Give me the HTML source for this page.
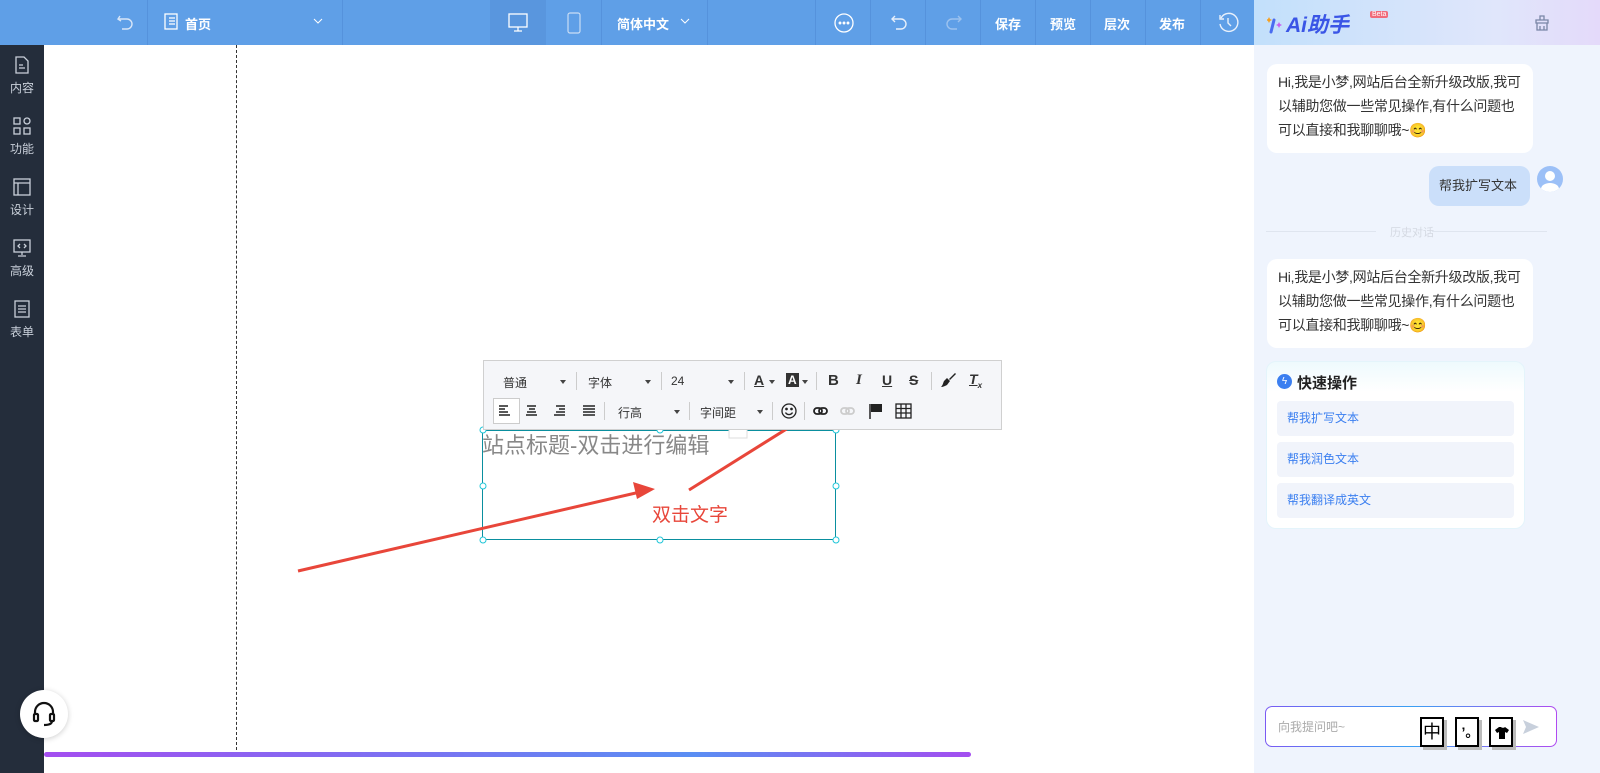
<!DOCTYPE html>
<html><head><meta charset="utf-8"><style>
*{margin:0;padding:0;box-sizing:border-box}
body{width:1600px;height:773px;overflow:hidden;background:#fff;font-family:"Liberation Sans","Noto Sans CJK SC",sans-serif;position:relative}
.top{position:absolute;left:0;top:0;width:1254px;height:45px;background:#5f9fe7;color:#fff;font-size:13px}
.top .sep{position:absolute;top:0;width:1px;height:45px;background:#5592dc}
.top .t{position:absolute;top:14px;font-weight:bold}
.side{position:absolute;left:0;top:45px;width:44px;height:728px;background:#242d3b;color:#c9d0da;font-size:12px}
.side div{position:absolute;left:0;width:44px;text-align:center}
.right{position:absolute;left:1254px;top:0;width:346px;height:773px;background:#eff4fd}
.rhead{position:absolute;left:0;top:0;width:346px;height:45px;background:linear-gradient(90deg,#c2e0fb,#e0e6fb 70%,#e4dafa)}
.bub{position:absolute;background:#fff;border-radius:10px;font-size:14px;line-height:24px;color:#333;padding:6px 8px 6px 11px;letter-spacing:-0.3px}
.qa{position:absolute;left:23px;width:237px;height:35px;background:#f1f4fb;border-radius:4px;color:#3b7ff0;font-size:12px;line-height:35px;padding-left:10px}
.tb{position:absolute;left:483px;top:360px;width:519px;height:70px;background:#f5f6f9;border:1px solid #d0d0d0;font-size:12px;color:#333}
.tb span{position:absolute}
.tri{position:absolute;width:0;height:0;border-left:3px solid transparent;border-right:3px solid transparent;border-top:4px solid #444}
.vs{position:absolute;width:1px;height:18px;background:#ccc}
</style></head><body>
<div class="top">
 <svg style="position:absolute;left:116px;top:13px" width="18" height="18" viewBox="0 0 18 18" fill="none" stroke="#d8e6f8" stroke-width="1.4"><path d="M4 3 L2 6 L5 8"/><path d="M2 6 H11 a5 5 0 0 1 0 10 H6"/></svg>
 <div class="sep" style="left:147px"></div>
 <svg style="position:absolute;left:164px;top:13px" width="15" height="18" viewBox="0 0 15 18" fill="none" stroke="#fff" stroke-width="1.3"><rect x="1" y="1" width="12" height="15"/><path d="M5 5h6M5 8h6M5 11h6"/></svg>
 <span class="t" style="left:185px">首页</span>
 <svg style="position:absolute;left:313px;top:17px" width="10" height="8" viewBox="0 0 10 8" fill="none" stroke="#fff"><path d="M1 2l4 4 4-4"/></svg>
 <div class="sep" style="left:342px"></div>
 <div style="position:absolute;left:490px;top:0;width:56px;height:45px;background:#5996de"></div>
 <svg style="position:absolute;left:507px;top:13px" width="22" height="20" viewBox="0 0 22 20" fill="none" stroke="#fff" stroke-width="1.3"><rect x="2" y="1" width="18" height="13"/><path d="M11 14v4M7 18h8"/></svg>
 <svg style="position:absolute;left:566px;top:12px" width="16" height="22" viewBox="0 0 16 22" fill="none" stroke="#c9ddf5" stroke-width="1.2"><rect x="2" y="1" width="12" height="20" rx="2"/></svg>
 <div class="sep" style="left:601px"></div>
 <span class="t" style="left:617px">简体中文</span>
 <svg style="position:absolute;left:680px;top:17px" width="10" height="8" viewBox="0 0 10 8" fill="none" stroke="#fff"><path d="M1 2l4 4 4-4"/></svg>
 <div class="sep" style="left:707px"></div>
 <div class="sep" style="left:815px"></div>
 <svg style="position:absolute;left:833px;top:12px" width="22" height="22" viewBox="0 0 22 22" fill="none" stroke="#fff" stroke-width="1.3"><circle cx="11" cy="11" r="9"/><circle cx="7" cy="11" r=".8" fill="#fff"/><circle cx="11" cy="11" r=".8" fill="#fff"/><circle cx="15" cy="11" r=".8" fill="#fff"/></svg>
 <div class="sep" style="left:870px"></div>
 <svg style="position:absolute;left:890px;top:13px" width="18" height="18" viewBox="0 0 18 18" fill="none" stroke="#e8f0fb" stroke-width="1.4"><path d="M5 3 L2 6 L5 9"/><path d="M2 6 H11 a5 5 0 0 1 0 10 H6"/></svg>
 <div class="sep" style="left:925px"></div>
 <svg style="position:absolute;left:945px;top:13px" width="18" height="18" viewBox="0 0 18 18" fill="none" stroke="#9cc2ef" stroke-width="1.4"><path d="M13 3 L16 6 L13 9"/><path d="M16 6 H7 a5 5 0 0 0 0 10 H12"/></svg>
 <div class="sep" style="left:980px"></div>
 <span class="t" style="left:995px">保存</span>
 <div class="sep" style="left:1035px"></div>
 <span class="t" style="left:1050px">预览</span>
 <div class="sep" style="left:1090px"></div>
 <span class="t" style="left:1104px">层次</span>
 <div class="sep" style="left:1145px"></div>
 <span class="t" style="left:1159px">发布</span>
 <div class="sep" style="left:1200px"></div>
 <svg style="position:absolute;left:1217px;top:12px" width="22" height="22" viewBox="0 0 22 22" fill="none" stroke="#e8f0fb" stroke-width="1.4"><path d="M4 6a9 9 0 1 1-1 6"/><path d="M3 3v4h4"/><path d="M11 6v5l3 3"/></svg>
</div>
<div class="side">
 <svg style="position:absolute;left:14px;top:11px" width="16" height="18" viewBox="0 0 16 18" fill="none" stroke="#c9d0da" stroke-width="1.3"><path d="M2 1h8l4 4v12H2z"/><path d="M5 9h4M5 12h6"/></svg>
 <div style="top:34px">内容</div>
 <svg style="position:absolute;left:13px;top:72px" width="18" height="18" viewBox="0 0 18 18" fill="none" stroke="#c9d0da" stroke-width="1.3"><rect x="1" y="1" width="6" height="6"/><rect x="11" y="1" width="6" height="6" rx="3"/><rect x="1" y="11" width="6" height="6"/><rect x="11" y="11" width="6" height="6"/></svg>
 <div style="top:95px">功能</div>
 <svg style="position:absolute;left:13px;top:133px" width="18" height="18" viewBox="0 0 18 18" fill="none" stroke="#c9d0da" stroke-width="1.3"><rect x="1" y="1" width="16" height="16"/><path d="M1 5h16M5 5v12"/></svg>
 <div style="top:156px">设计</div>
 <svg style="position:absolute;left:13px;top:194px" width="18" height="18" viewBox="0 0 18 18" fill="none" stroke="#c9d0da" stroke-width="1.3"><rect x="1" y="1" width="16" height="12"/><path d="M9 13v3M5 17h8M7 5l-2 2 2 2M11 5l2 2-2 2"/></svg>
 <div style="top:217px">高级</div>
 <svg style="position:absolute;left:13px;top:255px" width="18" height="18" viewBox="0 0 18 18" fill="none" stroke="#c9d0da" stroke-width="1.3"><rect x="2" y="1" width="14" height="16"/><path d="M5 6h8M5 9h8M5 12h8"/></svg>
 <div style="top:278px">表单</div>
</div>
<div style="position:absolute;left:236px;top:45px;height:710px;border-left:1px dashed #333"></div>
<div style="position:absolute;left:20px;top:690px;width:48px;height:48px;border-radius:50%;background:#fff;box-shadow:0 1px 6px rgba(0,0,0,.2)"></div>
<svg style="position:absolute;left:31px;top:700px" width="26" height="28" viewBox="0 0 26 28" fill="none" stroke="#111" stroke-width="2.2"><path d="M4 15v-3a9 9 0 0 1 18 0v3"/><rect x="3" y="14" width="4" height="7" rx="1"/><rect x="19" y="14" width="4" height="7" rx="1"/><path d="M21 21c0 3-4 4-8 4"/></svg>
<div style="position:absolute;left:44px;top:752px;width:927px;height:5px;border-radius:3px;background:linear-gradient(90deg,#a44ef0,#5a8ef3 70%,#a44ef0)"></div>

<div style="position:absolute;left:482px;top:430px;width:354px;height:110px;border:1.5px solid #0a8f9f"></div>
<div style="position:absolute;left:482px;top:428px;font-size:22px;color:#888;white-space:nowrap">站点标题-双击进行编辑</div>
<div style="position:absolute;left:652px;top:500px;font-size:19px;color:#e8463a">双击文字</div>
<svg style="position:absolute;left:0;top:0" width="1254" height="773">
 <g fill="#fff" stroke="#20c6d8"><circle cx="483" cy="430" r="3"/><circle cx="660" cy="430" r="3"/><circle cx="836" cy="430" r="3"/><circle cx="483" cy="486" r="3"/><circle cx="836" cy="486" r="3"/><circle cx="483" cy="540" r="3"/><circle cx="660" cy="540" r="3"/><circle cx="836" cy="540" r="3"/></g>
 <path d="M298 571 L640 492" stroke="#e8463a" stroke-width="3"/><path d="M655 489 L633 482 L637 499Z" fill="#e8463a"/>
 <path d="M689 490 L860 383" stroke="#e8463a" stroke-width="3"/><path d="M872 376 L851 380 L860 394Z" fill="#e8463a"/>
 <rect x="729" y="426" width="18" height="12" fill="#fff" stroke="#ddd"/>
</svg>
<div class="tb">
 <span style="left:19px;top:13px">普通</span><i class="tri" style="left:76px;top:19px"></i><div class="vs" style="left:92px;top:11px"></div>
 <span style="left:104px;top:13px">字体</span><i class="tri" style="left:161px;top:19px"></i><div class="vs" style="left:177px;top:11px"></div>
 <span style="left:187px;top:13px">24</span><i class="tri" style="left:244px;top:19px"></i><div class="vs" style="left:260px;top:11px"></div>
 <span style="left:270px;top:11px;font-weight:bold;font-size:14px;text-decoration:underline">A</span><i class="tri" style="left:285px;top:19px"></i>
 <span style="left:302px;top:12px;font-weight:bold;font-size:12px;background:#333;color:#fff;padding:0 2px">A</span><i class="tri" style="left:318px;top:19px"></i><div class="vs" style="left:332px;top:11px"></div>
 <span style="left:344px;top:11px;font-weight:bold;font-size:15px">B</span>
 <span style="left:372px;top:11px;font-style:italic;font-weight:bold;font-size:15px;font-family:'Liberation Serif'">I</span>
 <span style="left:398px;top:11px;font-weight:bold;font-size:14px;text-decoration:underline">U</span>
 <span style="left:425px;top:11px;font-weight:bold;font-size:14px;text-decoration:line-through">S</span><div class="vs" style="left:447px;top:11px"></div>
 <svg style="position:absolute;left:456px;top:11px" width="16" height="16" viewBox="0 0 16 16"><path d="M9 7l6-6 1 1-6 6z" fill="#222"/><path d="M7 6l3 3-3 4c-2 1-4 2-6 2 2-2 2-4 3-6z" fill="#222"/></svg>
 <span style="left:485px;top:10px;font-style:italic;font-weight:bold;font-size:14px;text-decoration:underline">T<sub style="font-size:8px">x</sub></span>
 <div style="position:absolute;left:9px;top:37px;width:27px;height:26px;border:1px solid #ccc;background:#fff"></div>
 <svg style="position:absolute;left:15px;top:44px" width="100" height="12" viewBox="0 0 100 12" stroke="#222" stroke-width="1.5"><path d="M0 1h9M0 4h6M0 7h9M0 10h11"/><path d="M28 1h9M30 4h6M28 7h9M27 10h11"/><path d="M57 1h9M60 4h6M57 7h9M55 10h11"/><path d="M84 1h12M84 4h12M84 7h12M84 10h12"/></svg>
 <div class="vs" style="left:120px;top:41px"></div>
 <span style="left:134px;top:43px">行高</span><i class="tri" style="left:190px;top:49px"></i><div class="vs" style="left:205px;top:41px"></div>
 <span style="left:216px;top:43px">字间距</span><i class="tri" style="left:273px;top:49px"></i><div class="vs" style="left:288px;top:41px"></div>
 <svg style="position:absolute;left:297px;top:42px" width="16" height="16" viewBox="0 0 16 16" fill="none" stroke="#222" stroke-width="1.3"><circle cx="8" cy="8" r="7"/><circle cx="5.5" cy="6" r=".7" fill="#222"/><circle cx="10.5" cy="6" r=".7" fill="#222"/><path d="M4.5 9.5a4 4 0 0 0 7 0"/></svg>
 <div class="vs" style="left:320px;top:41px"></div>
 <svg style="position:absolute;left:329px;top:45px" width="50" height="10" viewBox="0 0 50 10" fill="none" stroke-width="1.8"><rect x="1" y="2" width="8" height="6" rx="3" stroke="#222"/><rect x="6" y="2" width="8" height="6" rx="3" stroke="#222"/><rect x="28" y="2" width="8" height="6" rx="3" stroke="#ccc"/><rect x="33" y="2" width="8" height="6" rx="3" stroke="#ccc"/></svg>
 <svg style="position:absolute;left:385px;top:42px" width="14" height="16" viewBox="0 0 14 16"><path d="M1 1v15" stroke="#222" stroke-width="1.5"/><path d="M2 1h11v8H2z" fill="#222"/></svg>
 <svg style="position:absolute;left:411px;top:42px" width="17" height="16" viewBox="0 0 17 16" fill="none" stroke="#222" stroke-width="1.3"><rect x="1" y="1" width="15" height="14"/><path d="M1 5.5h15M1 10h15M6 1v14M11 1v14"/></svg>
</div>

<div class="right">
 <div class="rhead"></div>
 <svg style="position:absolute;left:13px;top:14px" width="16" height="20" viewBox="0 0 16 20"><path d="M4 18L7 6" stroke="#4a6cf0" stroke-width="3" stroke-linecap="round"/><path d="M2 3l1 2 2 1-2 1-1 2-1-2-2-1 2-1z" fill="#f5a020"/><path d="M12 8l1 2 2 1-2 1-1 2-1-2-2-1 2-1z" fill="#c95cf0"/></svg>
 <span style="position:absolute;left:32px;top:9px;font-size:21px;font-weight:bold;font-style:italic;color:#3a55e6">Ai助手</span>
 <span style="position:absolute;left:116px;top:11px;font-size:7px;background:#f06a7a;color:#fff;padding:0 2px;border-radius:2px">Beta</span>
 <svg style="position:absolute;left:280px;top:15px" width="16" height="16" viewBox="0 0 16 16" fill="none" stroke="#7a86a6" stroke-width="1.3"><path d="M6 1h4v4H6zM2 5h12v3H2zM3 8h10v7H3zM6 11v4M10 11v4"/></svg>
 <div class="bub" style="left:13px;top:64px;width:266px;height:89px">Hi,我是小梦,网站后台全新升级改版,我可以辅助您做一些常见操作,有什么问题也可以直接和我聊聊哦~😊</div>
 <div class="bub" style="left:175px;top:166px;width:101px;height:40px;background:#cbdffa;padding:6px 10px;font-size:13px;line-height:28px;letter-spacing:0">帮我扩写文本</div>
 <div style="position:absolute;left:283px;top:166px;width:26px;height:26px;border-radius:50%;background:#9cc0f7;overflow:hidden"><div style="position:absolute;left:8px;top:5px;width:10px;height:10px;border-radius:50%;background:#fff"></div><div style="position:absolute;left:4px;top:17px;width:18px;height:12px;border-radius:50%;background:#fff"></div></div>
 <div style="position:absolute;left:12px;top:231px;width:110px;height:1px;background:#dfe5ef"></div>
 <span style="position:absolute;left:136px;top:224px;font-size:11px;color:#d4d9e2">历史对话</span>
 <div style="position:absolute;left:178px;top:231px;width:115px;height:1px;background:#dfe5ef"></div>
 <div class="bub" style="left:13px;top:259px;width:266px;height:89px">Hi,我是小梦,网站后台全新升级改版,我可以辅助您做一些常见操作,有什么问题也可以直接和我聊聊哦~😊</div>
 <div style="position:absolute;left:12px;top:361px;width:259px;height:168px;background:linear-gradient(#eefafd,#fff 30px);border-radius:10px;border:1px solid #e4f4fb"></div>
 <div style="position:absolute;left:23px;top:374px;width:15px;height:15px;border-radius:50%;background:#3b7ff0;color:#fff;font-size:10px;text-align:center;line-height:15px">ϟ</div>
 <span style="position:absolute;left:43px;top:372px;font-size:15px;font-weight:bold;color:#222">快速操作</span>
 <div class="qa" style="top:401px">帮我扩写文本</div>
 <div class="qa" style="top:442px">帮我润色文本</div>
 <div class="qa" style="top:483px">帮我翻译成英文</div>
 <div style="position:absolute;left:11px;top:706px;width:292px;height:41px;border-radius:7px;background:linear-gradient(#fff,#fff) padding-box,linear-gradient(90deg,#7a5af3,#3aa0f3 50%,#b04af0) border-box;border:1px solid transparent"></div>
 <span style="position:absolute;left:24px;top:718px;font-size:12px;color:#aaa">向我提问吧~</span>
 <div style="position:absolute;left:166px;top:717px;width:24px;height:30px;border:2px solid #000;background:#fff;box-shadow:3px 3px 0 #bbb;font-size:18px;text-align:center;line-height:26px">中</div>
 <div style="position:absolute;left:201px;top:717px;width:24px;height:30px;border:2px solid #000;background:#fff;box-shadow:3px 3px 0 #bbb;font-size:14px;text-align:center;line-height:26px;font-weight:bold">’｡</div>
 <div style="position:absolute;left:235px;top:717px;width:24px;height:30px;border:2px solid #000;background:#fff;box-shadow:3px 3px 0 #bbb"><svg style="position:absolute;left:4px;top:8px" width="14" height="12" viewBox="0 0 14 12"><path d="M4 0L0 3l2 3 2-1v7h6V5l2 1 2-3-4-3c-1 1-3 1-4 0z" fill="#000"/></svg></div>
 <svg style="position:absolute;left:268px;top:719px" width="18" height="16" viewBox="0 0 18 16"><path d="M1 1l16 7-16 7 3-7z" fill="#c8d0dc"/></svg>
</div>
</body></html>
